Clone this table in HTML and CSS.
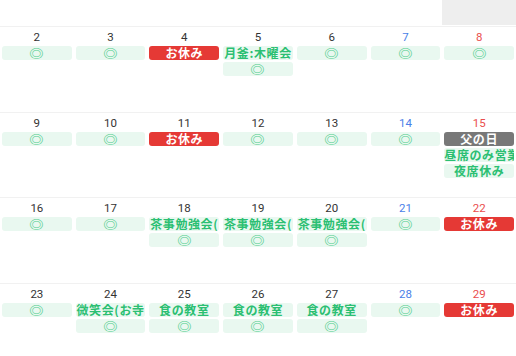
FILE: index.html
```html
<!DOCTYPE html>
<html lang="ja">
<head>
<meta charset="utf-8">
<link rel="stylesheet" href="styles.css">
</head>
<body>
<div class="cal">
  <div class="week partial">
    <div class="day"></div><div class="day"></div><div class="day"></div><div class="day"></div><div class="day"></div><div class="day"></div><div class="day shade"></div>
  </div>

  <div class="week">
    <div class="day"><div class="num">2</div><div class="ev ok"><span>◎</span></div></div>
    <div class="day"><div class="num">3</div><div class="ev ok"><span>◎</span></div></div>
    <div class="day"><div class="num">4</div><div class="ev off">お休み</div></div>
    <div class="day"><div class="num">5</div><div class="ev">月釜:木曜会</div><div class="ev ok"><span>◎</span></div></div>
    <div class="day"><div class="num">6</div><div class="ev ok"><span>◎</span></div></div>
    <div class="day sat"><div class="num">7</div><div class="ev ok"><span>◎</span></div></div>
    <div class="day sun"><div class="num">8</div><div class="ev ok"><span>◎</span></div></div>
  </div>

  <div class="week">
    <div class="day"><div class="num">9</div><div class="ev ok"><span>◎</span></div></div>
    <div class="day"><div class="num">10</div><div class="ev ok"><span>◎</span></div></div>
    <div class="day"><div class="num">11</div><div class="ev off">お休み</div></div>
    <div class="day"><div class="num">12</div><div class="ev ok"><span>◎</span></div></div>
    <div class="day"><div class="num">13</div><div class="ev ok"><span>◎</span></div></div>
    <div class="day sat"><div class="num">14</div><div class="ev ok"><span>◎</span></div></div>
    <div class="day sun"><div class="num">15</div><div class="ev holiday">父の日</div><div class="ev">昼席のみ営業</div><div class="ev">夜席休み</div></div>
  </div>

  <div class="week">
    <div class="day"><div class="num">16</div><div class="ev ok"><span>◎</span></div></div>
    <div class="day"><div class="num">17</div><div class="ev ok"><span>◎</span></div></div>
    <div class="day"><div class="num">18</div><div class="ev">茶事勉強会(</div><div class="ev ok"><span>◎</span></div></div>
    <div class="day"><div class="num">19</div><div class="ev">茶事勉強会(</div><div class="ev ok"><span>◎</span></div></div>
    <div class="day"><div class="num">20</div><div class="ev">茶事勉強会(</div><div class="ev ok"><span>◎</span></div></div>
    <div class="day sat"><div class="num">21</div><div class="ev ok"><span>◎</span></div></div>
    <div class="day sun"><div class="num">22</div><div class="ev off">お休み</div></div>
  </div>

  <div class="week">
    <div class="day"><div class="num">23</div><div class="ev ok"><span>◎</span></div></div>
    <div class="day"><div class="num">24</div><div class="ev">微笑会(お寺</div><div class="ev ok"><span>◎</span></div></div>
    <div class="day"><div class="num">25</div><div class="ev">食の教室</div><div class="ev ok"><span>◎</span></div></div>
    <div class="day"><div class="num">26</div><div class="ev">食の教室</div><div class="ev ok"><span>◎</span></div></div>
    <div class="day"><div class="num">27</div><div class="ev">食の教室</div><div class="ev ok"><span>◎</span></div></div>
    <div class="day sat"><div class="num">28</div><div class="ev ok"><span>◎</span></div></div>
    <div class="day sun"><div class="num">29</div><div class="ev off">お休み</div></div>
  </div>
</div>
</body>
</html>
```
FILE: styles.css
```css
html, body {
  margin: 0;
  padding: 0;
  background: #ffffff;
  overflow: hidden;
}

.cal {
  width: 516px;
  height: 356px;
  overflow: hidden;
  font-family: Roboto, "Noto Sans CJK JP", sans-serif;
}

.week {
  display: grid;
  grid-template-columns: repeat(7, 1fr);
  height: 85.5px;
  box-sizing: border-box;
  border-top: 1px solid #f1f1f1;
}

.week.partial {
  height: 26px;
  border-top: none;
}

.day {
  min-width: 0;
  display: flex;
  flex-direction: column;
  gap: 2px;
  padding: 1px 2px 0;
}

.day.shade {
  background: #eeeeee;
  margin-bottom: 1px;
}

.num {
  height: 16px;
  line-height: 18px;
  text-align: center;
  font-size: 11.5px;
  color: #333333;
}

.sat .num { color: #4a7fe8; }
.sun .num { color: #ea4d4d; }

.ev {
  height: 14px;
  line-height: 14px;
  border-radius: 3px;
  background: #e9f8f0;
  color: #2bbf72;
  font-family: "Noto Sans CJK JP", sans-serif;
  font-weight: 700;
  font-size: 12px;
  letter-spacing: 0.6px;
  text-align: center;
  white-space: nowrap;
  overflow: hidden;
}

.ev.ok {
  color: #4fcd8b;
  font-size: 11px;
  letter-spacing: 0;
}

.ev.ok span {
  display: inline-block;
  transform: scaleX(1.3);
}

.ev.off {
  background: #e53935;
  color: #ffffff;
}

.ev.holiday {
  background: #787878;
  color: #ffffff;
}
```
